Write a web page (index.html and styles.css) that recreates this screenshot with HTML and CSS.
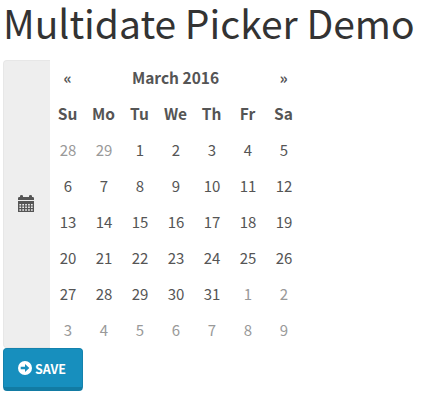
FILE: index.html
```html
<!DOCTYPE html>
<html lang="en">
<head>
<meta charset="utf-8">
<title>Multidate Picker Demo</title>
<link rel="stylesheet" href="styles.css">
</head>
<body>
<h1 class="title">Multidate Picker Demo</h1>
<form class="picker">
  <div class="group">
    <div class="addon">
      <svg class="calendar-icon" width="16" height="17" viewBox="0 0 16 17">
        <path fill="currentColor" d="M0 5V3.2Q0 2 1.2 2H2V1Q2 0 3.5 0T5 1V2H11V1Q11 0 12.5 0T14 1V2H14.8Q16 2 16 3.2V5Z"/>
        <path fill="currentColor" fill-rule="evenodd" d="M0 6H16V17H0ZM1.4 9V10.5H3.1V9ZM4.3 9V10.5H6V9ZM7.2 9V10.5H8.9V9ZM10.1 9V10.5H11.8V9ZM13 9V10.5H14.7V9ZM1.4 11.6V13.1H3.1V11.6ZM4.3 11.6V13.1H6V11.6ZM7.2 11.6V13.1H8.9V11.6ZM10.1 11.6V13.1H11.8V11.6ZM13 11.6V13.1H14.7V11.6ZM1.4 14.2V15.7H3.1V14.2ZM4.3 14.2V15.7H6V14.2ZM7.2 14.2V15.7H8.9V14.2ZM10.1 14.2V15.7H11.8V14.2ZM13 14.2V15.7H14.7V14.2Z"/>
      </svg>
    </div>
    <table class="calendar">
      <thead>
        <tr><th>«</th><th colspan="5">March 2016</th><th>»</th></tr>
        <tr><th>Su</th><th>Mo</th><th>Tu</th><th>We</th><th>Th</th><th>Fr</th><th>Sa</th></tr>
      </thead>
      <tbody>
        <tr><td class="muted">28</td><td class="muted">29</td><td>1</td><td>2</td><td>3</td><td>4</td><td>5</td></tr>
        <tr><td>6</td><td>7</td><td>8</td><td>9</td><td>10</td><td>11</td><td>12</td></tr>
        <tr><td>13</td><td>14</td><td>15</td><td>16</td><td>17</td><td>18</td><td>19</td></tr>
        <tr><td>20</td><td>21</td><td>22</td><td>23</td><td>24</td><td>25</td><td>26</td></tr>
        <tr><td>27</td><td>28</td><td>29</td><td>30</td><td>31</td><td class="muted">1</td><td class="muted">2</td></tr>
        <tr><td class="muted">3</td><td class="muted">4</td><td class="muted">5</td><td class="muted">6</td><td class="muted">7</td><td class="muted">8</td><td class="muted">9</td></tr>
      </tbody>
    </table>
  </div>
  <button class="save" type="button">
    <svg width="14" height="14" viewBox="0 0 14 14">
      <circle cx="7" cy="7" r="7" fill="#fff"/>
      <path class="arrow" d="M2.7 5.7H7V3L11.3 7 7 11V8.3H2.7Z"/>
    </svg>
    <span class="save-label">SAVE</span>
  </button>
</form>
</body>
</html>
```

FILE: styles.css
```css
* {
  box-sizing: border-box;
}

body {
  margin: 0;
  background: #fff;
  color: #555;
  font-family: "Noto Sans CJK SC", "Open Sans", sans-serif;
  font-size: 15px;
}

.title {
  margin: 0;
  padding-left: 3px;
  height: 60px;
  color: #333;
  font-size: 39px;
  font-weight: 400;
  line-height: 44px;
  white-space: nowrap;
}

.picker {
  padding-left: 3px;
}

.group {
  display: flex;
  height: 288px;
}

.addon {
  display: flex;
  align-items: center;
  width: 47px;
  padding: 0 0 2px 14px;
  border: 1px solid #e7e7e7;
  border-right: 0;
  border-radius: 4px 0 0 4px;
  background: #eee;
}

.calendar {
  width: 252px;
  height: 288px;
  table-layout: fixed;
  border-collapse: collapse;
  line-height: 20px;
  text-align: center;
}

.calendar th,
.calendar td {
  height: 36px;
  padding: 0;
}

.calendar th {
  padding: 0 1px 2px 0;
  font-size: 15.5px;
}

.muted {
  color: #999;
}

.save {
  display: flex;
  align-items: center;
  gap: 3px;
  width: 80px;
  height: 43px;
  padding: 0 0 0 14px;
  border: 1px solid #1482ad;
  border-bottom: 4px solid #127ba3;
  border-radius: 4px;
  background: #178fbe;
  color: #fff;
  font: 700 12.5px/20px "Noto Sans CJK SC", "Open Sans", sans-serif;
}

.save-label {
  padding-top: 2px;
}

.arrow {
  fill: #178fbe;
}
```
